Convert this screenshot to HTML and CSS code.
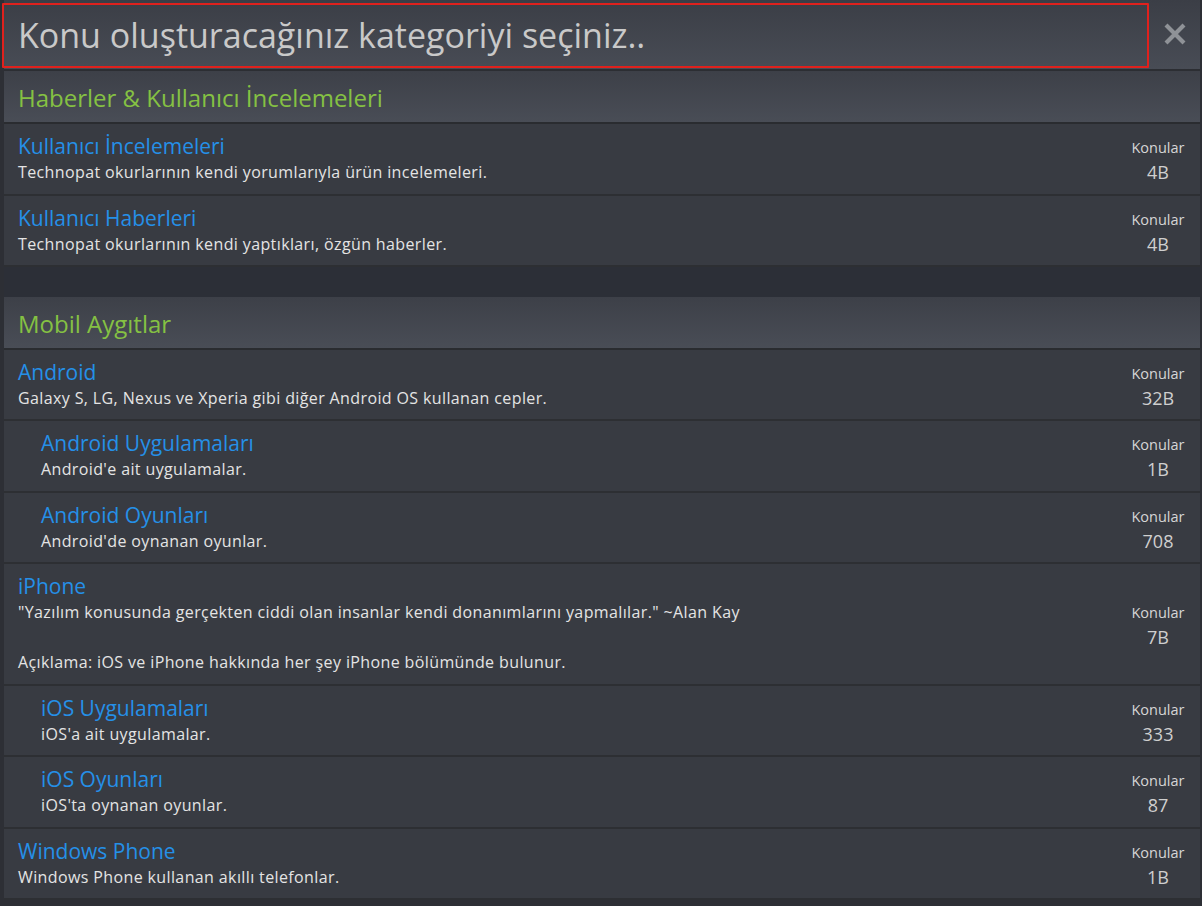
FILE: index.html
```html
<!DOCTYPE html>
<html lang="tr">
<head>
<meta charset="utf-8">
<title>Kategori seçimi</title>
<link rel="stylesheet" href="styles.css">
</head>
<body>
<div class="panel">
  <div class="topbar">
    <div class="search">Konu oluşturacağınız kategoriyi seçiniz..</div>
    <div class="close">
      <svg width="26" height="26" viewBox="0 0 26 26"><path d="M4 4 L22 22 M22 4 L4 22" stroke="#8f9297" stroke-width="4.2" stroke-linecap="butt"/></svg>
    </div>
  </div>

  <div class="section">
    <div class="cat">Haberler &amp; Kullanıcı İncelemeleri</div>
    <div class="row">
      <div class="info"><div class="title">Kullanıcı İncelemeleri</div><div class="desc">Technopat okurlarının kendi yorumlarıyla ürün incelemeleri.</div></div>
      <div class="stats"><div class="lbl">Konular</div><div class="val">4B</div></div>
    </div>
    <div class="row">
      <div class="info"><div class="title">Kullanıcı Haberleri</div><div class="desc">Technopat okurlarının kendi yaptıkları, özgün haberler.</div></div>
      <div class="stats"><div class="lbl">Konular</div><div class="val">4B</div></div>
    </div>
  </div>

  <div class="spacer"></div>

  <div class="section">
    <div class="cat">Mobil Aygıtlar</div>
    <div class="row">
      <div class="info"><div class="title">Android</div><div class="desc">Galaxy S, LG, Nexus ve Xperia gibi diğer Android OS kullanan cepler.</div></div>
      <div class="stats"><div class="lbl">Konular</div><div class="val">32B</div></div>
    </div>
    <div class="row sub">
      <div class="info"><div class="title">Android Uygulamaları</div><div class="desc">Android'e ait uygulamalar.</div></div>
      <div class="stats"><div class="lbl">Konular</div><div class="val">1B</div></div>
    </div>
    <div class="row sub">
      <div class="info"><div class="title">Android Oyunları</div><div class="desc">Android'de oynanan oyunlar.</div></div>
      <div class="stats"><div class="lbl">Konular</div><div class="val">708</div></div>
    </div>
    <div class="row">
      <div class="info"><div class="title">iPhone</div><div class="desc">"Yazılım konusunda gerçekten ciddi olan insanlar kendi donanımlarını yapmalılar." ~Alan Kay<br><br>Açıklama: iOS ve iPhone hakkında her şey iPhone bölümünde bulunur.</div></div>
      <div class="stats"><div class="lbl">Konular</div><div class="val">7B</div></div>
    </div>
    <div class="row sub">
      <div class="info"><div class="title">iOS Uygulamaları</div><div class="desc">iOS'a ait uygulamalar.</div></div>
      <div class="stats"><div class="lbl">Konular</div><div class="val">333</div></div>
    </div>
    <div class="row sub">
      <div class="info"><div class="title">iOS Oyunları</div><div class="desc">iOS'ta oynanan oyunlar.</div></div>
      <div class="stats"><div class="lbl">Konular</div><div class="val">87</div></div>
    </div>
    <div class="row">
      <div class="info"><div class="title">Windows Phone</div><div class="desc">Windows Phone kullanan akıllı telefonlar.</div></div>
      <div class="stats"><div class="lbl">Konular</div><div class="val">1B</div></div>
    </div>
  </div>
</div>
</body>
</html>
```

FILE: styles.css
```css
html, body {
  margin: 0;
  padding: 0;
  background: #2d2f35;
  height: 100%;
  overflow: hidden;
}
body {
  font-family: "Open Sans", "Noto Sans", sans-serif;
  color: #e2e2e2;
}
.panel {
  margin: 0 2px 0 4px;
  background: #383b42;
}
.topbar {
  display: flex;
  align-items: stretch;
  height: 69px;
  background: linear-gradient(#3b3e46, #484c55);
  border-bottom: 2px solid #2c2e33;
}
.search {
  flex: 1;
  margin: 3px 0 0 -2px;
  height: 61px;
  border: 2px solid #e0211d;
  border-radius: 1px;
  padding-left: 14px;
  font-size: 34px;
  line-height: 61px;
  color: #c9c9c9;
}
.close {
  width: 51px;
  display: flex;
  align-items: center;
  justify-content: center;
  padding-bottom: 2px;
}
.cat {
  height: 51px;
  line-height: 54px;
  padding-left: 14px;
  font-size: 24px;
  color: #85c143;
  background: linear-gradient(#3d4048, #494d56);
  border-bottom: 2px solid #2a2c30;
}
.row {
  display: flex;
  align-items: center;
  padding: 9px 10px 8.5px 14px;
  border-bottom: 2px solid #2d2f33;
  background: #383b42;
}
.row.sub {
  padding-left: 37px;
}
.info {
  flex: 1;
}
.title {
  font-size: 21px;
  line-height: 27px;
  color: #2590e8;
}
.desc {
  font-size: 16px;
  line-height: 25px;
  color: #e4e4e4;
  letter-spacing: 0.38px;
}
.stats {
  width: 64px;
  text-align: center;
  color: #d6d6d6;
  padding-top: 4px;
}
.lbl {
  font-size: 14.5px;
  line-height: 22px;
}
.val {
  font-size: 18px;
  line-height: 26px;
  color: #cfcfcf;
}
.spacer {
  height: 29.5px;
  background: #2c2f37;
}
```
